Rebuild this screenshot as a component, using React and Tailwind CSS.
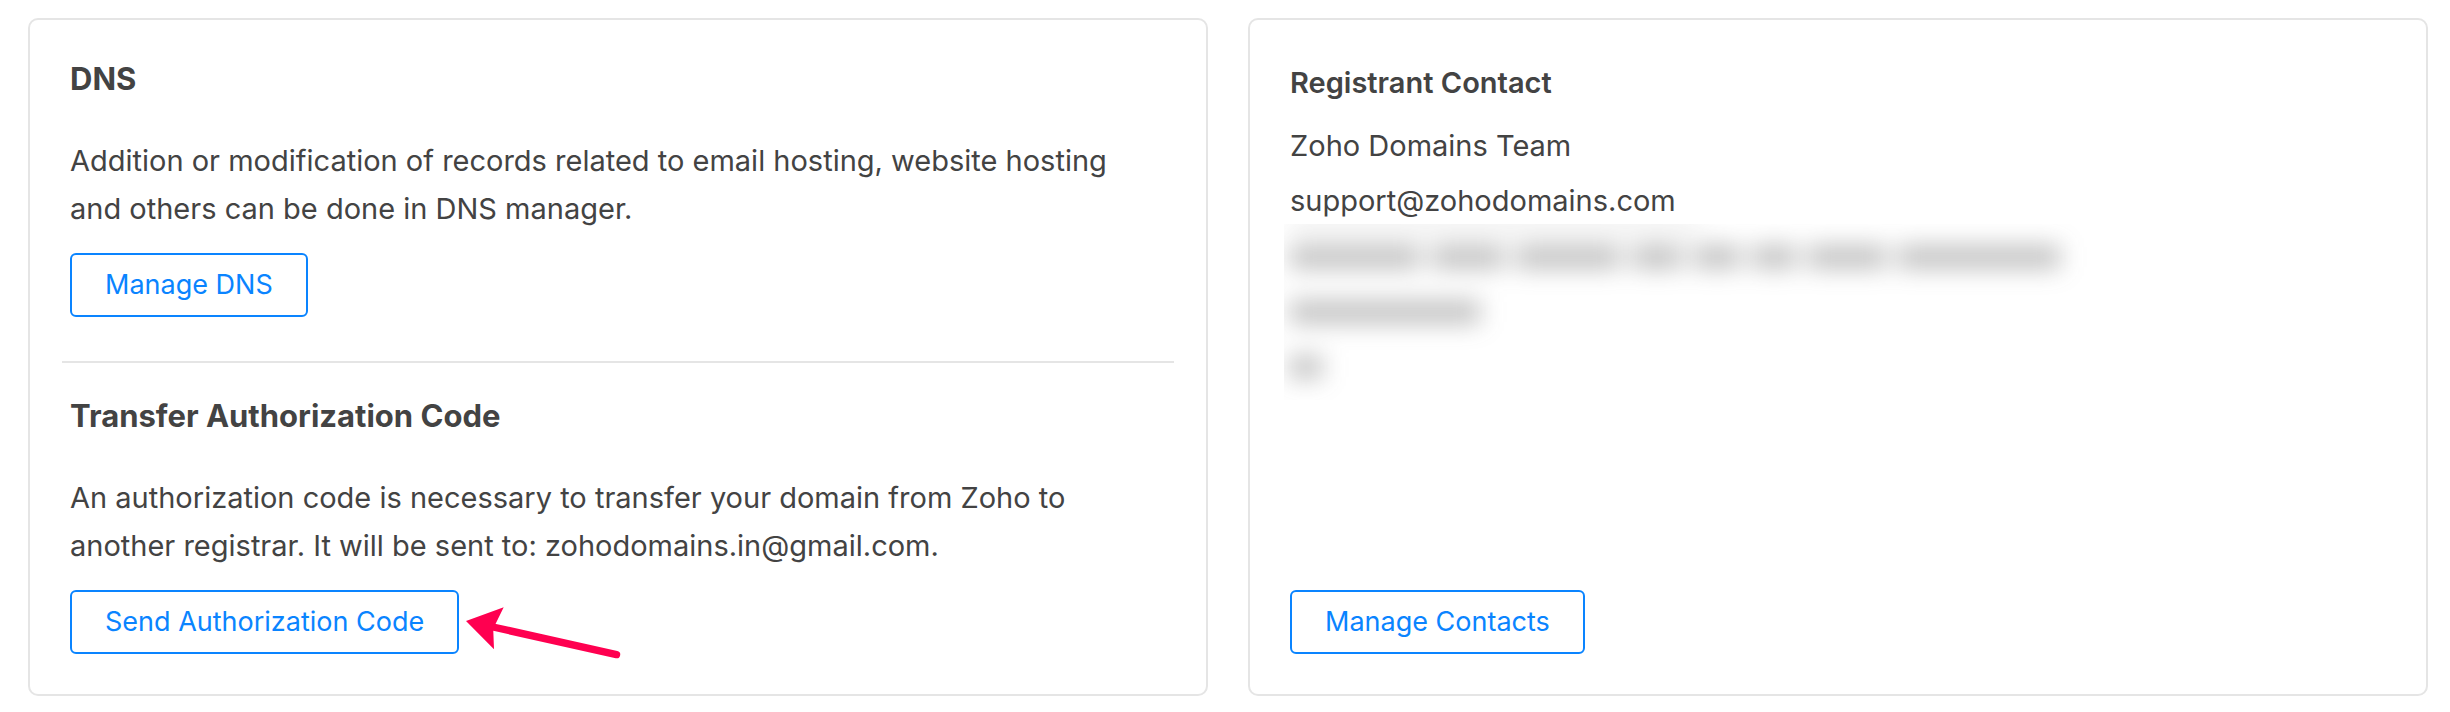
import React from 'react';

// Bar widths stand in for the words of each hidden address line
const HIDDEN_ADDRESS = [
    [
        'w-[130px]', 'w-[72px]', 'w-[104px]', 'w-[50px]', 'w-[46px]', 'w-[44px]', 'w-[78px]', 'w-[162px]',
    ],
    ['w-[190px]'],
    ['w-[32px]'],
];

const OutlineButton = ({ children }) => (
    <button
        type="button"
        className="h-16 px-[33px] border-2 border-[#0a84ff] rounded-md bg-white text-[27px] text-[#0a84ff] whitespace-nowrap cursor-pointer hover:bg-blue-50"
    >
        {children}
    </button>
);

const Card = ({ children }) => (
    <section className="flex-1 flex flex-col items-start p-10 border-2 border-[#e5e5e5] rounded-[10px] bg-white">
        {children}
    </section>
);

const CardHeading = ({ children }) => (
    <h2 className="text-[31px] leading-[38px] font-bold">{children}</h2>
);

const CardText = ({ children }) => (
    <p className="mt-[39px] mb-5 pr-10 text-[29px] leading-[48px]">{children}</p>
);

const PointerArrow = () => (
    <svg
        className="absolute left-full top-0 ml-1.5 overflow-visible pointer-events-none"
        width="160"
        height="72"
        viewBox="0 0 160 72"
        fill="none"
        aria-hidden="true"
    >
        <path d="M28 37 L151.5 64.6" stroke="#ff0050" strokeWidth="7.4" strokeLinecap="round" />
        <path d="M1 31 L38.7 17.3 L30.5 34 L28.3 41 L29 59.3 Z" fill="#ff0050" />
    </svg>
);

const HiddenAddress = () => (
    <div className="w-[820px] max-w-full h-[176px] -ml-1.5 overflow-hidden" aria-hidden="true">
        <div className="pl-1.5 blur-[12px]">
            <div className="w-[410px] h-1 mb-[18px] bg-[#434343]/30"></div>
            <div className="flex flex-col gap-[33px]">
                {HIDDEN_ADDRESS.map((line, index) => (
                    <div key={index} className="flex gap-3">
                        {line.map((width, i) => (
                            <div key={i} className={`h-[22px] bg-[#434343]/35 ${width}`}></div>
                        ))}
                    </div>
                ))}
            </div>
        </div>
    </div>
);

const App = () => {
    return (
        <main className="flex items-stretch gap-10 pt-[18px] pb-4 pl-7 pr-[22px] bg-white text-[#434343] font-['Inter',sans-serif]">
            <Card>
                <CardHeading>DNS</CardHeading>
                <CardText>
                    Addition or modification of records related to email hosting, website hosting and others can be
                    done in DNS manager.
                </CardText>
                <OutlineButton>Manage DNS</OutlineButton>

                <div className="self-stretch -mx-2 mt-11 mb-[34px] h-0.5 bg-[#e5e5e5]"></div>

                <CardHeading>Transfer Authorization Code</CardHeading>
                <CardText>
                    An authorization code is necessary to transfer your domain from Zoho to another registrar. It will
                    be sent to: zohodomains.in@gmail.com.
                </CardText>
                <div className="relative">
                    <OutlineButton>Send Authorization Code</OutlineButton>
                    <PointerArrow />
                </div>
            </Card>

            <Card>
                <h3 className="mb-[17px] text-[29px] leading-[46px] font-semibold">Registrant Contact</h3>
                <div className="flex flex-col gap-[9px] text-[29px] leading-[46px]">
                    <p>Zoho Domains Team</p>
                    <p>support@zohodomains.com</p>
                </div>
                <HiddenAddress />
                <div className="mt-auto">
                    <OutlineButton>Manage Contacts</OutlineButton>
                </div>
            </Card>
        </main>
    );
};

export default App;
